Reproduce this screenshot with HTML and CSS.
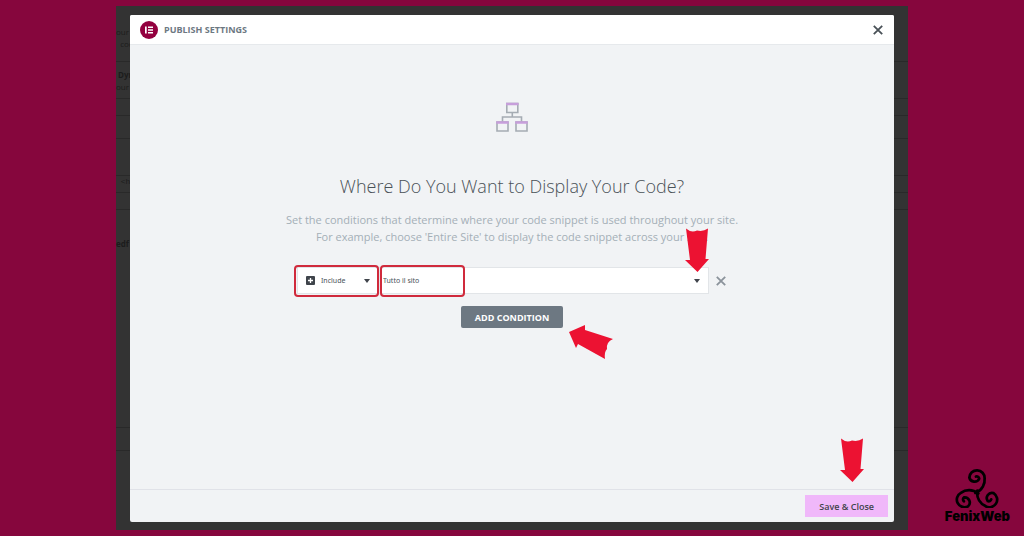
FILE: index.html
```html
<!DOCTYPE html>
<html lang="en">
<head>
    <meta charset="UTF-8">
    <meta name="viewport" content="width=device-width, initial-scale=1.0">
    <title>Publish Settings</title>
    <link rel="stylesheet" href="styles.css">
</head>
<body>

    <div class="stage">
        <!-- editor page behind the modal -->
        <div class="backdrop" aria-hidden="true">
            <div class="strip strip-intro"><p>our a</p><p>&nbsp; code</p></div>
            <div class="strip strip-text"><p class="bold">&nbsp;Dynamic</p><p>our a</p></div>
            <div class="strip strip-small"></div>
            <div class="strip strip-medium"></div>
            <div class="strip strip-text"></div>
            <div class="strip strip-small code">&nbsp;&lt;head</div>
            <div class="strip strip-small"></div>
            <div class="strip strip-large bold">edf</div>
            <div class="strip strip-medium"></div>
        </div>

        <div class="modal" role="dialog" aria-labelledby="modal-title">
            <header class="modal-header">
                <svg class="brand" viewBox="0 0 18 18" aria-hidden="true">
                    <circle cx="9" cy="9" r="9" fill="#93003f"/>
                    <path d="M5 5.500h1.700v7H5zM8 5.500h5v1.500H8zM8 8.200h5v1.500H8zM8 11h5v1.500H8z" fill="#fff"/>
                </svg>
                <h1 id="modal-title">PUBLISH SETTINGS</h1>
                <button class="icon-button close" aria-label="Close">
                    <svg viewBox="0 0 10 10"><path d="M1.500 1.500l7 7M8.500 1.500l-7 7"/></svg>
                </button>
            </header>

            <main class="modal-body">
                <svg class="sitemap" viewBox="0 0 34 30" aria-hidden="true">
                    <g fill="none" stroke="#a5acb3" stroke-width="1.600">
                        <path d="M11.800 1.500h11v9h-11zM2 20h11v9H2zM21 20h11v9H21z"/>
                        <path d="M17.300 10.500V15M7.500 20v-5h19v5"/>
                    </g>
                    <path d="M11 .7h12.600v2.600H11zM1.200 19.200h12.600v2.600H1.200zM20.200 19.200h12.600v2.600H20.200z" fill="#c79fdb"/>
                </svg>
                <h2>Where Do You Want to Display Your Code?</h2>
                <p class="intro">Set the conditions that determine where your code snippet is used throughout your site.<br>For example, choose 'Entire Site' to display the code snippet across your site.</p>

                <div class="condition">
                    <div class="field field-type">
                        <svg class="plus" viewBox="0 0 9 9" aria-hidden="true">
                            <rect width="9" height="9" rx="1" fill="#3f444b"/>
                            <path d="M4.500 2v5M2 4.500h5" stroke="#fff" stroke-width="1.300"/>
                        </svg>
                        <select aria-label="Condition type">
                            <option>Include</option>
                            <option>Exclude</option>
                        </select>
                        <svg class="caret" viewBox="0 0 6 4" aria-hidden="true"><path d="M0 0h6L3 4z"/></svg>
                        <span class="highlight"></span>
                    </div>
                    <div class="field field-name">
                        <select aria-label="Where to display">
                            <option>Tutto il sito</option>
                        </select>
                        <svg class="caret" viewBox="0 0 6 4" aria-hidden="true"><path d="M0 0h6L3 4z"/></svg>
                        <span class="highlight"></span>
                        <svg class="arrow arrow-field" viewBox="0 0 24 44" aria-hidden="true"><path d="M1 .5Q6 5 12 2.500Q18 4 23 .5L20.500 31h3.500L12.500 44 0 32h5z"/></svg>
                    </div>
                    <button class="icon-button remove" aria-label="Remove condition">
                        <svg viewBox="0 0 10 10"><path d="M1.500 1.500l7 7M8.500 1.500l-7 7"/></svg>
                    </button>
                </div>

                <div class="add">
                    <button class="add-button">ADD CONDITION</button>
                    <svg class="arrow arrow-add" viewBox="0 0 44 34" aria-hidden="true"><path d="M0 7L16 0v5L44 14Q37 17 38 24Q35 27 36 34L9 19 7 23z"/></svg>
                </div>
            </main>

            <footer class="modal-footer">
                <button class="save-button">Save &amp; Close</button>
                <svg class="arrow arrow-save" viewBox="0 0 24 44" aria-hidden="true"><path d="M1 .5Q6 5 12 2.500Q18 4 23 .5L20.500 31h3.500L12.500 44 0 32h5z"/></svg>
            </footer>
        </div>
    </div>

    <div class="logo">
        <svg viewBox="-22 -22 44 36" aria-hidden="true">
            <defs>
                <path id="spiral" d="M-1.500 .5C5 -2 7.500 -8 7 -13A7 7 0 0 0 -7 -13.500A4.800 4.800 0 0 0 2 -12.500A2.300 2.300 0 0 0 -1 -14.500"/>
            </defs>
            <g fill="none" stroke="#000" stroke-width="2.500" stroke-linecap="round">
                <use href="#spiral"/>
                <use href="#spiral" transform="rotate(120)"/>
                <use href="#spiral" transform="rotate(240)"/>
            </g>
        </svg>
        <span>FenixWeb</span>
    </div>

</body>
</html>
```
FILE: styles.css
```css
* {
    box-sizing: border-box;
}
body {
    margin: 0;
    min-height: 100vh;
    padding: 6px 116px;
    display: flex;
    background-color: #86063d;
    font-family: "Open Sans", "Noto Sans", sans-serif;
    color: #495157;
}
h1, h2, p {
    margin: 0;
}
button {
    border: none;
    padding: 0;
    font-family: inherit;
    cursor: pointer;
}
.stage {
    position: relative;
    flex: 1;
    display: flex;
    padding: 9px 14px 8px;
    background-color: #333;
}

/* Dimmed page behind */
.backdrop {
    position: absolute;
    inset: 0;
    overflow: hidden;
    font-size: 8px;
    line-height: 12px;
    color: #1c1c1c;
}
.strip {
    border-bottom: 1px solid #292929;
    overflow: hidden;
}
.strip-intro {
    height: 56px;
    padding-top: 20px;
}
.strip-text {
    height: 37px;
    padding-top: 7px;
}
.strip-small {
    height: 17px;
}
.strip-medium {
    height: 23px;
}
.strip-large {
    height: 218px;
    padding-top: 28px;
}
.bold {
    font-weight: bold;
}
.code {
    font-family: "Liberation Mono", monospace;
}

/* Modal */
.modal {
    position: relative;
    flex: 1;
    display: flex;
    flex-direction: column;
    background-color: #f1f3f5;
    border-radius: 2px;
}
.modal-header {
    display: flex;
    align-items: center;
    height: 30px;
    padding: 0 10px;
    background-color: #fff;
    border-bottom: 1px solid #e6e9ec;
    border-radius: 2px 2px 0 0;
}
.brand {
    width: 18px;
    height: 18px;
    margin-right: 6px;
}
.modal-header h1 {
    font-size: 9px;
    font-weight: 700;
    color: #6d7882;
}
.icon-button {
    display: flex;
    background: none;
}
.icon-button svg {
    width: 12px;
    height: 12px;
    fill: none;
    stroke: #495157;
    stroke-width: 1.5;
}
.close {
    margin-left: auto;
}
.modal-body {
    flex: 1;
    display: flex;
    flex-direction: column;
    align-items: center;
    padding-top: 57px;
}
.sitemap {
    width: 34px;
    height: 30px;
}
.modal-body h2 {
    margin-top: 42px;
    font-size: 18px;
    line-height: 24px;
    font-weight: 300;
}
.intro {
    margin-top: 13px;
    font-size: 11px;
    line-height: 17px;
    text-align: center;
    color: #a4afb7;
}

/* Condition row */
.condition {
    display: flex;
    align-items: center;
    width: 430px;
    max-width: 100%;
    margin-top: 22px;
}
.field {
    position: relative;
    display: flex;
    align-items: center;
    height: 27px;
    background-color: #fff;
    border: 1px solid #e2e5e8;
}
.field select {
    flex: 1;
    min-width: 0;
    height: 100%;
    padding: 0;
    border: none;
    appearance: none;
    background: none;
    font-family: "Noto Sans", sans-serif;
    font-size: 7px;
    color: #495157;
}
.field-type {
    width: 82px;
    padding: 0 8px;
}
.field-name {
    flex: 1;
    padding: 0 8px 0 3px;
}
.plus {
    width: 9px;
    height: 9px;
    margin-right: 6px;
}
.caret {
    width: 6px;
    height: 4px;
    fill: #3f444b;
}
.highlight {
    position: absolute;
    top: -3px;
    left: -4px;
    width: 85px;
    height: 32px;
    border: 2px solid #d02a3c;
    border-radius: 4px;
    pointer-events: none;
}
.field-name .highlight {
    left: 0;
}
.remove {
    margin-left: 6px;
}
.remove svg {
    stroke: #8b939b;
}
.add {
    position: relative;
    margin-top: 12px;
}
.add-button {
    display: block;
    height: 22px;
    padding: 0 14px;
    border-radius: 2px;
    background-color: #6d7882;
    font-size: 9px;
    font-weight: 700;
    color: #fff;
}

/* Footer */
.modal-footer {
    position: relative;
    display: flex;
    justify-content: flex-end;
    align-items: center;
    height: 33px;
    padding: 0 6px;
    border-top: 1px solid #e0e2e8;
}
.save-button {
    height: 22px;
    padding: 0 14px;
    background-color: #f0b8fa;
    font-size: 9px;
    font-weight: 600;
    color: #3f444b;
}

/* Red pointers */
.arrow {
    position: absolute;
    width: 24px;
    height: 44px;
    fill: #ec1232;
}
.arrow-field {
    top: -40px;
    right: -1px;
}
.arrow-add {
    top: 19px;
    left: calc(100% + 6px);
    width: 44px;
    height: 34px;
}
.arrow-save {
    right: 30px;
    bottom: 40px;
}

/* Logo */
.logo {
    position: absolute;
    right: 14px;
    bottom: 12px;
    display: flex;
    flex-direction: column;
    align-items: center;
    font-family: Inter, sans-serif;
    font-size: 13px;
    line-height: 16px;
    font-weight: 900;
    color: #000;
}
.logo svg {
    width: 48px;
    height: 40px;
}
```
